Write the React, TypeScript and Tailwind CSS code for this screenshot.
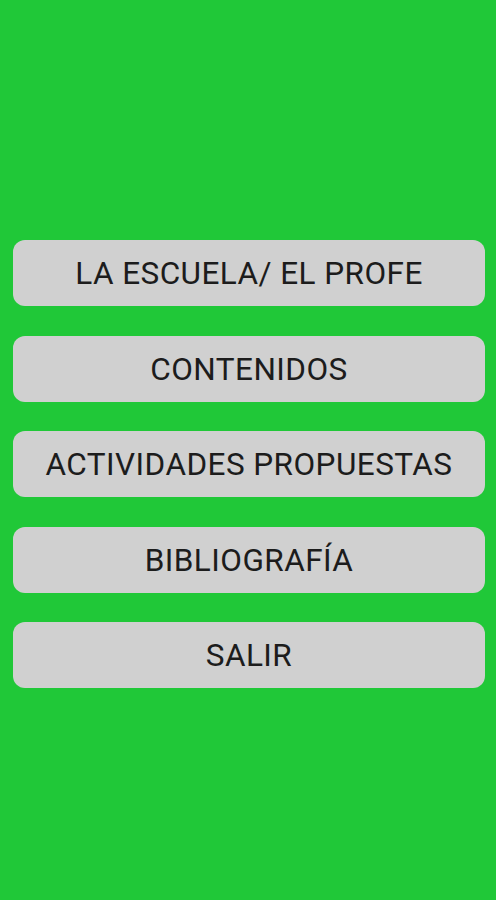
const items = [
  "LA ESCUELA/ EL PROFE",
  "CONTENIDOS",
  "ACTIVIDADES PROPUESTAS",
  "BIBLIOGRAFÍA",
  "SALIR",
];

export default function App() {
  return (
    <div className="min-h-[900px] w-full bg-[#20c838] pl-[13px] pr-[11px] pt-[240px] font-['Roboto',sans-serif]">
      <div className="flex flex-col gap-[29.5px]">
        {items.map((label) => (
          <button
            key={label}
            className="flex h-[66px] w-full items-center justify-center rounded-[12px] bg-[#d0d0d0] pt-[2px] text-[31.5px] tracking-[0.45px] text-[#1c1c1c]"
          >
            {label}
          </button>
        ))}
      </div>
    </div>
  );
}
